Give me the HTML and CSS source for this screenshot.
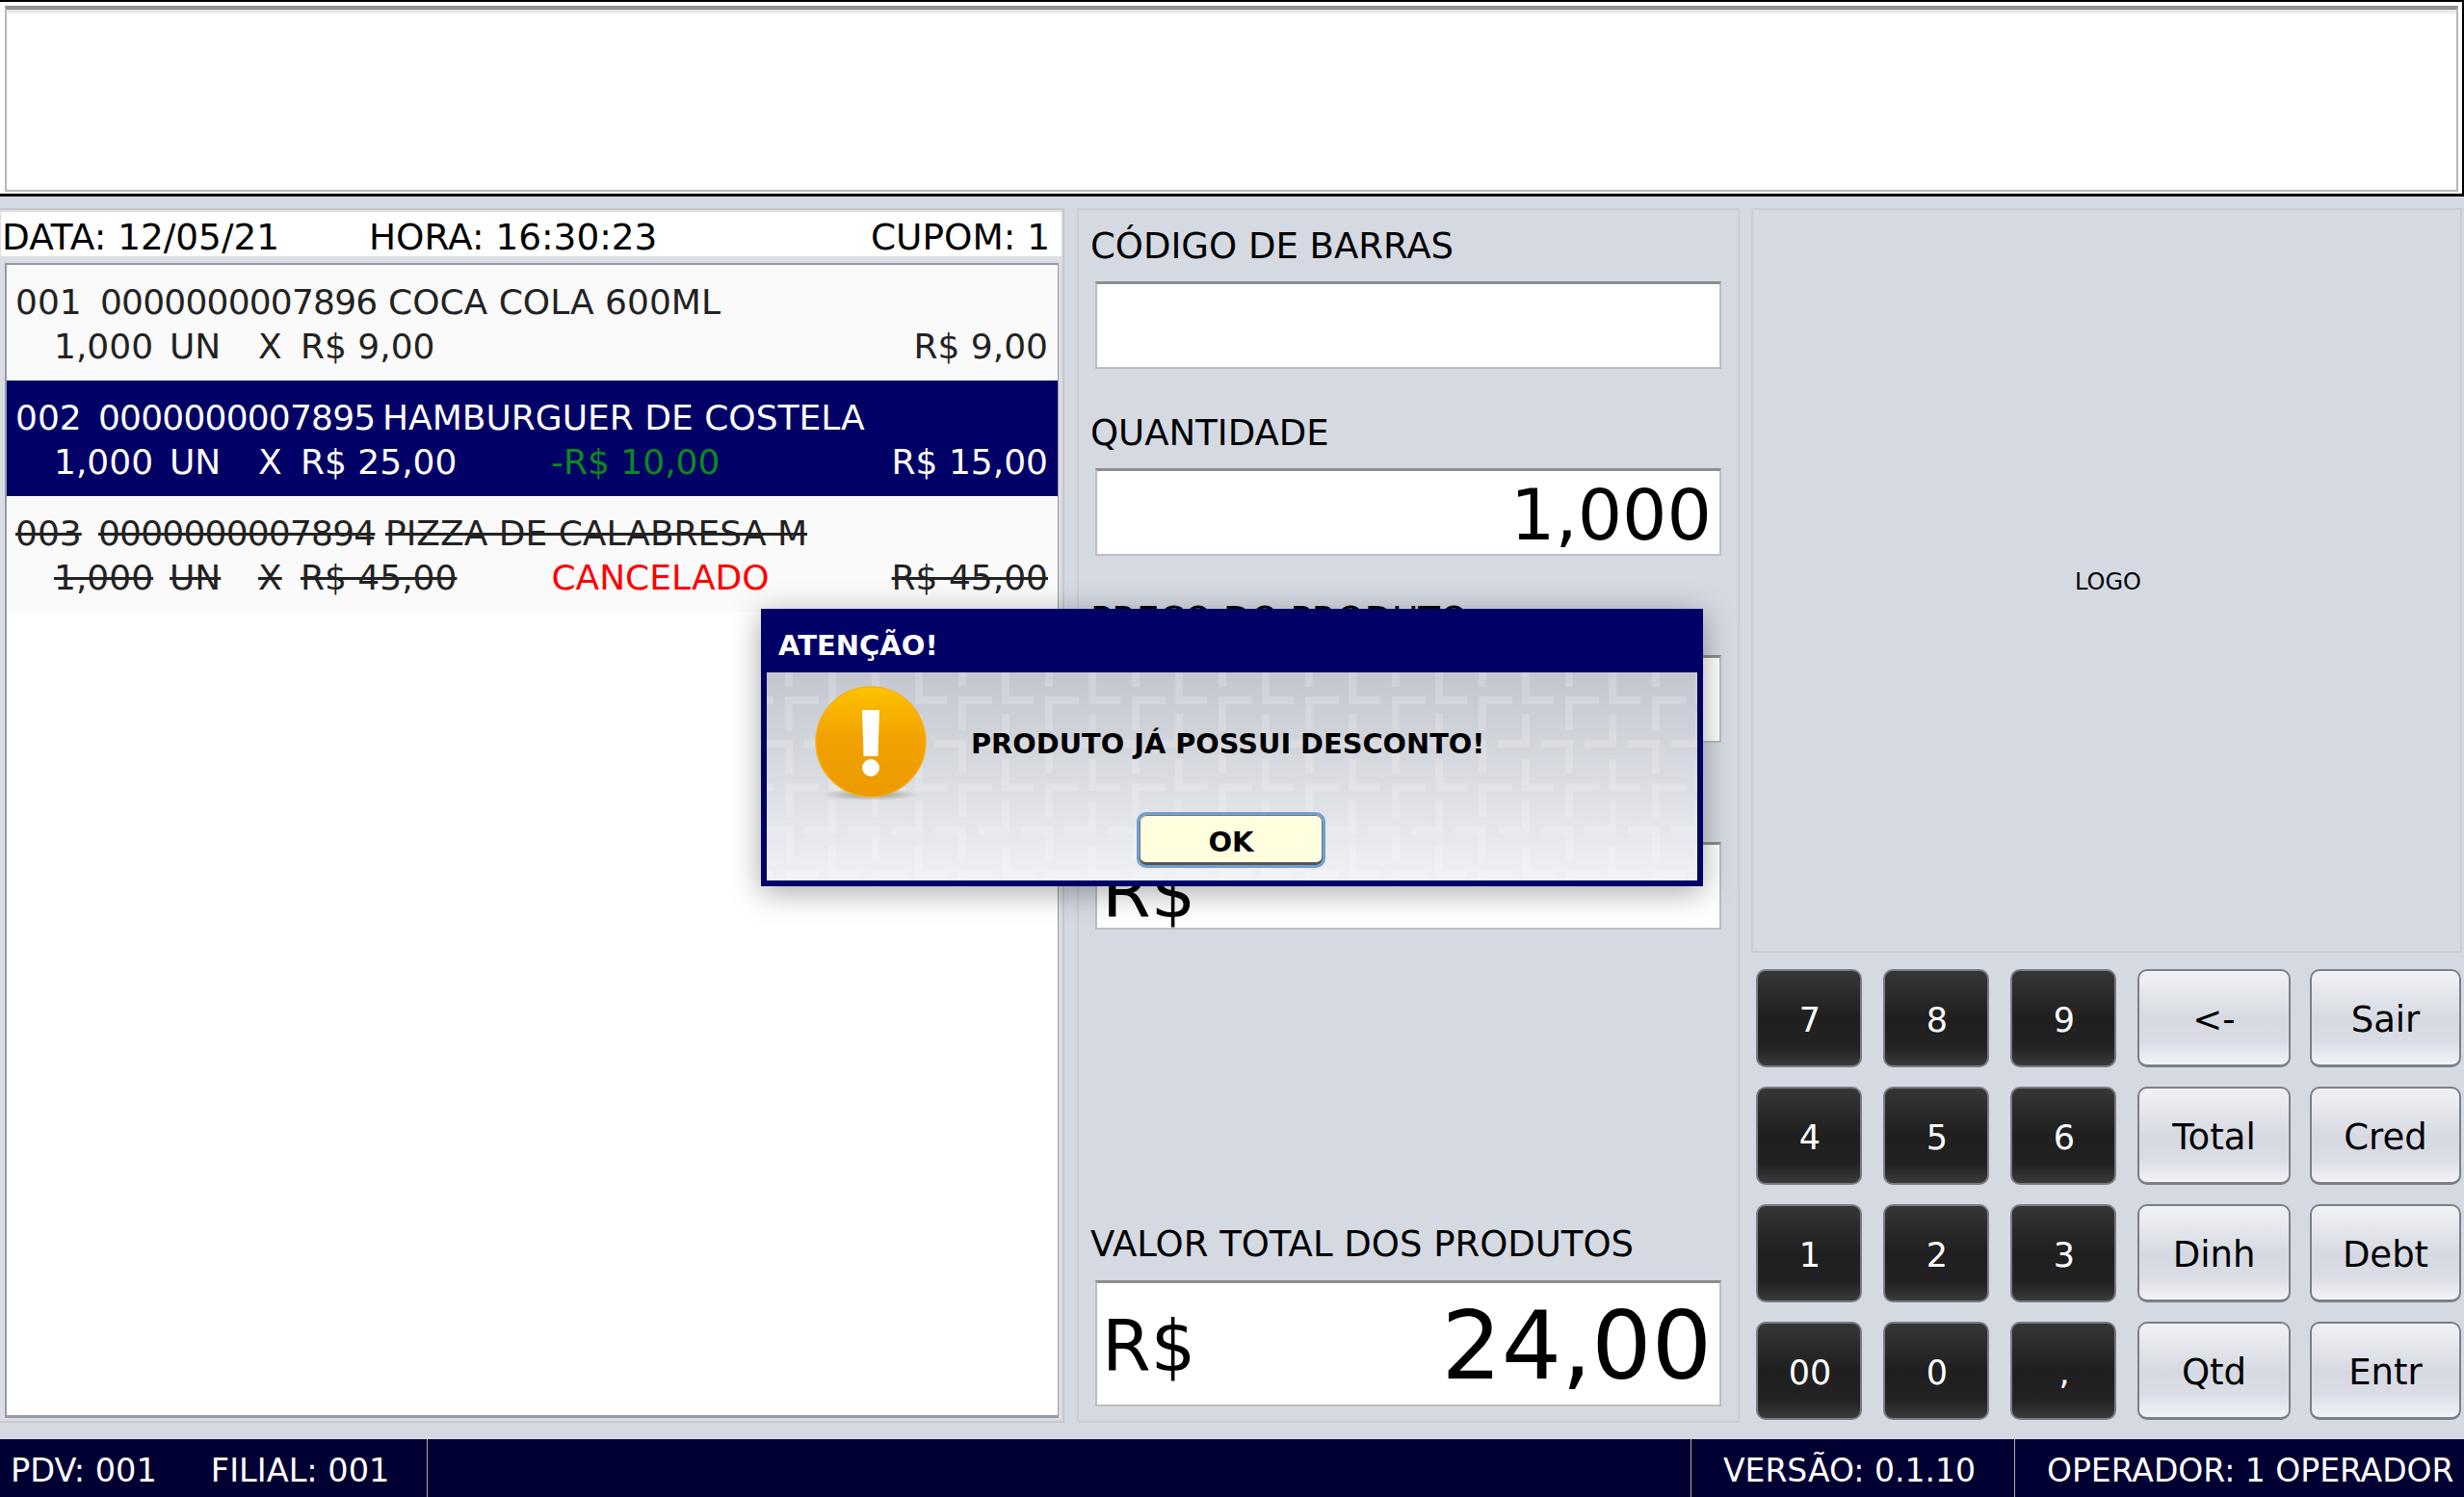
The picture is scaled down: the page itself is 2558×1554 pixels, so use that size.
FILE: index.html
```
<!DOCTYPE html>
<html lang="pt-BR">
<head>
    <meta charset="UTF-8">
    <title>PDV</title>
    <link rel="stylesheet" href="styles.css">
</head>
<body>
    <div class="topo"><div class="topo-inner"></div></div>

    <main class="principal">
        <section class="col-cupom">
            <div class="cabecalho">
                <span class="cab-data">DATA: 12/05/21</span>
                <span class="cab-hora">HORA: 16:30:23</span>
                <span class="cab-cupom">CUPOM: 1</span>
            </div>
            <div class="lista">
                <div class="item">
                    <div class="linha"><span class="seq">001</span><span class="cod">0000000007896</span><span class="nome">COCA COLA 600ML</span></div>
                    <div class="linha linha2"><span class="qtd">1,000</span><span class="un">UN</span><span class="x">X</span><span class="preco">R$ 9,00</span><span class="extra"></span><span class="total">R$ 9,00</span></div>
                </div>
                <div class="item item-sel">
                    <div class="linha"><span class="seq">002</span><span class="cod">0000000007895</span><span class="nome">HAMBURGUER DE COSTELA</span></div>
                    <div class="linha linha2"><span class="qtd">1,000</span><span class="un">UN</span><span class="x">X</span><span class="preco">R$ 25,00</span><span class="extra desconto">-R$ 10,00</span><span class="total">R$ 15,00</span></div>
                </div>
                <div class="item item-canc">
                    <div class="linha"><span class="seq">003</span><span class="cod">0000000007894</span><span class="nome">PIZZA DE CALABRESA M</span></div>
                    <div class="linha linha2"><span class="qtd">1,000</span><span class="un">UN</span><span class="x">X</span><span class="preco">R$ 45,00</span><span class="extra cancelado">CANCELADO</span><span class="total">R$ 45,00</span></div>
                </div>
            </div>
        </section>

        <section class="col-campos">
            <label class="rotulo">CÓDIGO DE BARRAS</label>
            <div class="campo"></div>
            <label class="rotulo">QUANTIDADE</label>
            <div class="campo campo-qtd"><span></span><span>1,000</span></div>
            <label class="rotulo">PREÇO DO PRODUTO</label>
            <div class="campo"></div>
            <label class="rotulo">SUBTOTAL</label>
            <div class="campo campo-rs"><span>R$</span><span></span></div>
            <label class="rotulo rotulo-total">VALOR TOTAL DOS PRODUTOS</label>
            <div class="campo campo-total"><span>R$</span><span class="valor-total">24,00</span></div>
        </section>

        <section class="col-direita">
            <div class="logo">LOGO</div>
            <div class="teclado">
                <button class="tecla">7</button>
                <button class="tecla">8</button>
                <button class="tecla">9</button>
                <button class="func">&lt;-</button>
                <button class="func">Sair</button>
                <button class="tecla">4</button>
                <button class="tecla">5</button>
                <button class="tecla">6</button>
                <button class="func">Total</button>
                <button class="func">Cred</button>
                <button class="tecla">1</button>
                <button class="tecla">2</button>
                <button class="tecla">3</button>
                <button class="func">Dinh</button>
                <button class="func">Debt</button>
                <button class="tecla">00</button>
                <button class="tecla">0</button>
                <button class="tecla">,</button>
                <button class="func">Qtd</button>
                <button class="func">Entr</button>
            </div>
        </section>
    </main>

    <footer class="rodape">
        <div class="rod-pdv"><span>PDV: 001</span><span>FILIAL: 001</span></div>
        <div class="rod-meio"></div>
        <div class="rod-versao">VERSÃO: 0.1.10</div>
        <div class="rod-operador">OPERADOR: 1 OPERADOR</div>
    </footer>

    <div class="dialogo">
        <div class="dlg-titulo">ATENÇÃO!</div>
        <div class="dlg-corpo">
            <svg class="dlg-fundo" width="100%" height="100%">
                <defs>
                    <pattern id="grega" x="64" width="90" height="90" patternUnits="userSpaceOnUse">
                        <path d="M0 0h8v25h25v8H0zM45 25h35v8H53v27h-8zM45 0h8v15h-8zM0 43h8v35H0zM65 70h25v8H65zM20 70h33v20h-8V78H20z" fill="#fff" fill-opacity=".18"/>
                    </pattern>
                </defs>
                <rect width="100%" height="100%" fill="url(#grega)"/>
            </svg>
            <div class="dlg-msg">
                <svg class="dlg-icone" width="124" height="128" viewBox="0 0 124 128">
                    <defs>
                        <linearGradient id="lar" x1="0" y1="0" x2="0" y2="1">
                            <stop offset="0" stop-color="#fdc300"/>
                            <stop offset=".45" stop-color="#f2a200"/>
                            <stop offset="1" stop-color="#ec9a00"/>
                        </linearGradient>
                        <radialGradient id="sombra">
                            <stop offset="0" stop-color="#7f8468" stop-opacity=".75"/>
                            <stop offset="1" stop-color="#7f8468" stop-opacity="0"/>
                        </radialGradient>
                    </defs>
                    <ellipse cx="62" cy="117" rx="52" ry="6" fill="url(#sombra)"/>
                    <circle cx="62" cy="62" r="57" fill="url(#lar)" stroke="#f5b01e" stroke-width="1.5"/>
                    <path d="M53 29h18l-1.500 48h-15z" fill="#fff"/>
                    <circle cx="62" cy="89" r="9" fill="#fff"/>
                </svg>
                <span class="dlg-texto">PRODUTO JÁ POSSUI DESCONTO!</span>
            </div>
            <button class="dlg-ok">OK</button>
        </div>
    </div>
</body>
</html>
```
FILE: styles.css
```
* {
    box-sizing: border-box;
}
html, body {
    margin: 0;
    height: 100%;
}
body {
    width: 2558px;
    height: 1554px;
    overflow: hidden;
    position: relative;
    display: flex;
    flex-direction: column;
    background: #d5d9e2;
    font-family: "DejaVu Sans", Verdana, sans-serif;
    color: #000;
}
button {
    font-family: inherit;
    padding: 0;
    cursor: pointer;
}

/* faixa de cima */
.topo {
    height: 204px;
    background: #fff;
    border: solid #000;
    border-width: 2px 2px 3px 0;
    padding: 4px 4px 2px 5px;
}
.topo-inner {
    height: 100%;
    border: 1px solid #b8b8b8;
    border-width: 0 2px 2px 2px;
    border-top: 4px solid #8f8f8f;
    background: linear-gradient(#dedede, #fff 6px);
}

/* colunas */
.principal {
    flex: 1;
    display: flex;
    padding: 12px 2px 17px 0;
}
.col-cupom {
    width: 1105px;
    padding: 4px 1px 3px 1px;
    border: solid #c8c8c8;
    border-width: 0 2px 2px 0;
    background: #dadde4;
    display: flex;
    flex-direction: column;
    box-shadow: inset 0 2px 0 #c8c8c8;
}
.cabecalho {
    height: 46px;
    flex: none;
    background: #fff;
    display: flex;
    align-items: center;
    padding-top: 5px;
    font-size: 37.4px;
    white-space: nowrap;
}
.cab-data {
    width: 382px;
    padding-left: 1px;
}
.cab-cupom {
    margin-left: auto;
    padding-right: 12px;
}
.lista {
    flex: 1;
    margin: 7px 3px 0 4px;
    background: #fff;
    border: solid #949aa6;
    border-width: 2px 1px 3px 2px;
}
.item {
    height: 120px;
    padding: 15px 10px 0 9px;
    background: #fafafa;
    color: #222;
    font-size: 36px;
}
.item-sel {
    background: #000066;
    color: #fff;
}
.item-canc .seq,
.item-canc .cod,
.item-canc .nome,
.item-canc .qtd,
.item-canc .un,
.item-canc .x,
.item-canc .preco,
.item-canc .total {
    text-decoration: line-through;
}
.linha {
    display: flex;
    align-items: center;
    height: 46px;
    white-space: nowrap;
}
.seq {
    width: 88px;
}
.cod {
    width: 299px;
    letter-spacing: -0.8px;
}
.item-sel .seq,
.item-canc .seq {
    width: 86px;
}
.item-sel .cod {
    width: 295px;
}
.item-canc .cod {
    width: 298px;
}
.linha2 {
    padding-left: 40px;
}
.qtd {
    width: 120px;
}
.un {
    width: 92px;
}
.x {
    width: 44px;
}
.preco {
    width: 260px;
    flex: none;
}
.item-canc .preco {
    width: auto;
    margin-right: 98px;
}
.desconto {
    color: #0a8a1e;
}
.cancelado {
    color: #ff0000;
}
.total {
    margin-left: auto;
}

.col-campos {
    width: 688px;
    margin-left: 13px;
    padding: 0 17px;
    border: 2px solid #cacdd4;
    display: flex;
    flex-direction: column;
}
.rotulo {
    display: block;
    height: 46px;
    margin: 15px 0 1px -5px;
    font-size: 37px;
    line-height: 46px;
    white-space: nowrap;
}
.campo {
    height: 91px;
    margin: 12px 0 29px;
    flex: none;
    background: #fff;
    border: 2px solid #bdbdbd;
    border-top: 3px solid #8d8d8d;
    display: flex;
    justify-content: space-between;
    align-items: center;
    padding: 0 8px 0 5px;
    font-size: 73px;
    line-height: 1;
}
.campo-qtd {
    padding-top: 4px;
}
.campo-rs {
    padding-top: 12px;
}
.rotulo-total {
    margin-top: auto;
}
.campo-total {
    height: 131px;
    margin: 13px 0 15px;
    padding-top: 4px;
}
.valor-total {
    font-size: 98px;
}

.col-direita {
    width: 738px;
    margin-left: 12px;
    display: flex;
    flex-direction: column;
}
.logo {
    height: 773px;
    border: 2px solid #cacdd4;
    display: flex;
    align-items: center;
    justify-content: center;
    font-size: 24px;
    padding: 2px 0 0 3px;
}
.teclado {
    display: grid;
    grid-template-columns: 110px 110px 110px 159px 155px;
    grid-auto-rows: 102px;
    column-gap: 22px;
    row-gap: 20px;
    margin: 17px 3px 0 5px;
}
.teclado .func:nth-child(5n) {
    margin-left: -2px;
}
.tecla {
    border: 2px solid #777c85;
    border-radius: 10px;
    padding: 3px 0 0 2px;
    background: linear-gradient(#363636, #1f1f1f 50%, #222 80%, #3a3a3a);
    color: #fff;
    font-size: 35px;
}
.func {
    border: 2px solid #7b7f87;
    border-bottom-width: 3px;
    border-radius: 10px;
    padding-top: 3px;
    background: linear-gradient(#f1f2f5, #d6d9e2 52%, #dadde6 75%, #f2f3f7);
    color: #000;
    font-size: 37px;
}

/* barra de baixo */
.rodape {
    height: 60px;
    flex: none;
    background: #000033;
    color: #fff;
    font-size: 33px;
    display: flex;
    align-items: center;
    white-space: nowrap;
}
.rodape > div {
    height: 100%;
    display: flex;
    align-items: center;
    padding-top: 4px;
}
.rod-pdv {
    width: 444px;
    padding-left: 11px;
    gap: 56px;
    border-right: 1px solid #aaa;
    font-size: 33.6px;
}
.rod-meio {
    width: 1311px;
}
.rod-versao {
    width: 337px;
    padding-left: 33px;
    border-left: 1px solid #aaa;
    border-right: 1px solid #aaa;
}
.rod-operador {
    padding-left: 33px;
}

/* janela de aviso */
.dialogo {
    position: absolute;
    left: 790px;
    top: 632px;
    width: 978px;
    height: 288px;
    background: #000066;
    padding: 0 6px 6px;
    display: flex;
    flex-direction: column;
    box-shadow: 0 6px 30px rgba(0, 0, 0, 0.35);
}
.dlg-titulo {
    height: 66px;
    flex: none;
    padding: 18px 0 0 12px;
    color: #fff;
    font-size: 29px;
    font-weight: bold;
    line-height: 40px;
}
.dlg-corpo {
    flex: 1;
    position: relative;
    background: linear-gradient(#c3c6cf, #f0f1f5);
    overflow: hidden;
}
.dlg-fundo {
    position: absolute;
    left: 0;
    top: 0;
}
.dlg-msg {
    position: relative;
    display: flex;
    align-items: flex-start;
    padding: 10px 0 0 46px;
}
.dlg-texto {
    margin: 44px 0 0 42px;
    font-size: 28.8px;
    font-weight: bold;
    line-height: 40px;
    white-space: nowrap;
}
.dlg-ok {
    position: absolute;
    left: 384px;
    top: 145px;
    width: 196px;
    height: 58px;
    padding-top: 3px;
    border: 3px solid #6f9fd0;
    border-radius: 10px;
    background: #ffffe0;
    box-shadow: inset 0 -3px 0 #555, inset 0 0 0 1px #777;
    font-size: 29px;
    font-weight: bold;
}
```
